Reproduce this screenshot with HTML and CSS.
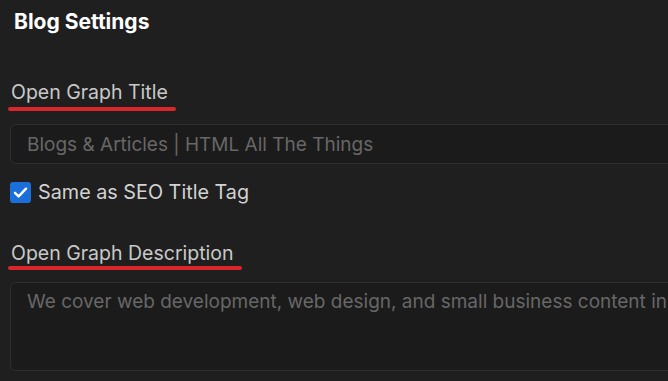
FILE: index.html
```html
<!DOCTYPE html>
<html lang="en">
<head>
    <meta charset="UTF-8">
    <meta name="viewport" content="width=device-width, initial-scale=1.0">
    <title>Blog Settings</title>
    <link rel="stylesheet" href="styles.css">
</head>
<body>
    <div class="settings-panel">
        <h2 class="panel-title">Blog Settings</h2>

        <!-- Open Graph Title -->
        <div class="field field-title">
            <label class="field-label" for="ogTitle">Open Graph Title</label>
            <input type="text" id="ogTitle" class="field-input" placeholder="Blogs &amp; Articles | HTML All The Things">
        </div>

        <label class="check-row" for="sameAsSeo">
            <input type="checkbox" id="sameAsSeo" class="check-native" checked>
            <span class="check-box">
                <svg viewBox="0 0 16 16" width="17" height="17"><path d="M2.8 8.3l3.4 3.3L13.2 4.4" fill="none" stroke="#fff" stroke-width="2.3" stroke-linecap="round" stroke-linejoin="round"/></svg>
            </span>
            <span class="check-text">Same as SEO Title Tag</span>
        </label>

        <!-- Open Graph Description -->
        <div class="field field-desc">
            <label class="field-label" for="ogDesc">Open Graph Description</label>
            <textarea id="ogDesc" class="field-input field-textarea" placeholder="We cover web development, web design, and small business content in our articles"></textarea>
        </div>
    </div>
</body>
</html>
```

FILE: styles.css
```css
/* Page */
body {
    margin: 0;
    background-color: #1f1f1f;
    font-family: Inter, "Noto Sans", sans-serif;
    overflow: hidden;
}

.settings-panel {
    padding: 10px 0 0 10px;
    width: 740px;
}

.panel-title {
    margin: 0 0 0 4px;
    font-size: 21px;
    line-height: 24px;
    font-weight: 700;
    color: #ffffff;
}

/* Labels with red underline */
.field {
    display: flex;
    flex-direction: column;
    align-items: flex-start;
}

.field-title {
    margin-top: 46px;
}

.field-desc {
    margin-top: 37px;
}

.field-label {
    display: inline-block;
    margin-left: -2px;
    padding: 0 8px 0 3px;
    font-size: 19.5px;
    line-height: 24px;
    color: #c9c9c9;
}

.field-label::after {
    content: "";
    display: block;
    height: 4px;
    margin: 3px -8px 0 -3px;
    border-radius: 2px;
    background-color: #d8262b;
}

.field-desc .field-label::after {
    margin-top: 1px;
}

/* Inputs */
.field-input {
    box-sizing: border-box;
    width: 100%;
    height: 40px;
    margin-top: 13px;
    padding: 0 16px;
    background-color: #1b1b1b;
    border: 1px solid #2f2f2f;
    border-radius: 6px;
    font-family: inherit;
    font-size: 19px;
    color: #6b6b6b;
    outline: none;
}

.field-input::placeholder {
    color: #676767;
}

.field-textarea {
    height: 89px;
    margin-top: 12px;
    padding: 7px 16px;
    line-height: 24px;
    resize: none;
    overflow: hidden;
    white-space: nowrap;
}

/* Checkbox */
.check-row {
    display: flex;
    align-items: center;
    gap: 7px;
    margin-top: 16px;
}

.check-native {
    display: none;
}

.check-box {
    width: 21px;
    height: 21px;
    border-radius: 3px;
    background-color: #1a6fdb;
    display: flex;
    align-items: center;
    justify-content: center;
}

.check-text {
    font-size: 19.8px;
    line-height: 24px;
    color: #d2d2d2;
}
```
